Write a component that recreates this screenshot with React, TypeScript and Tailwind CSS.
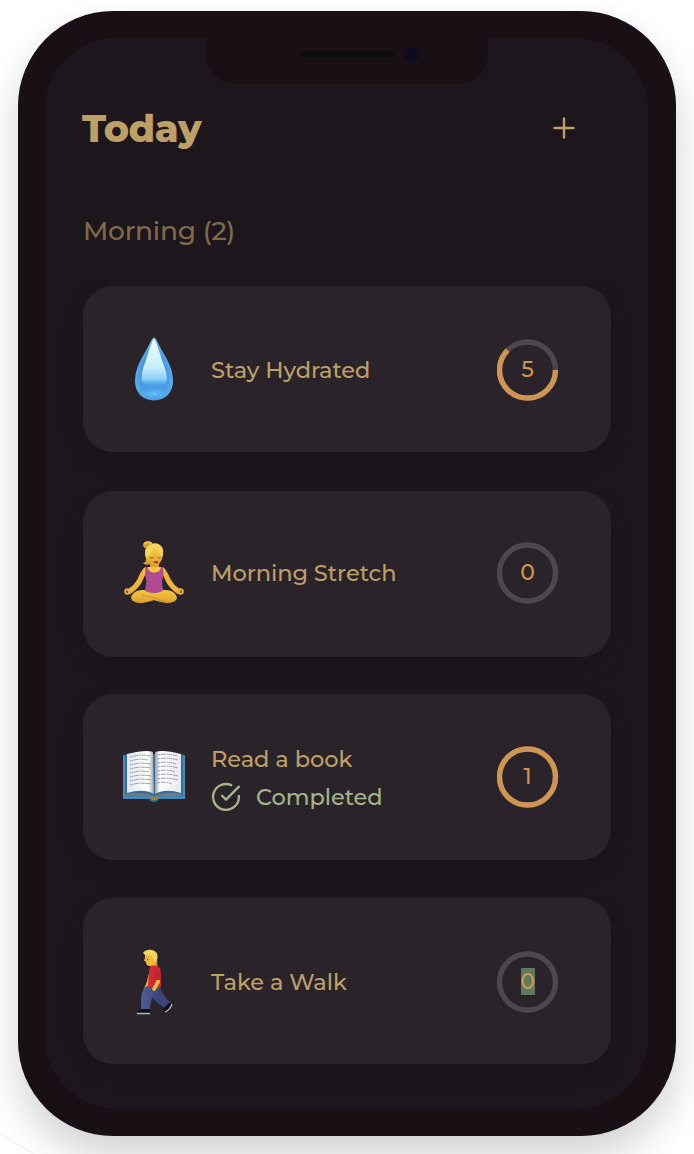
import React from "react";

function Droplet() {
  return (
    <svg width="62" height="66" viewBox="0 0 62 66">
      <defs>
        <radialGradient id="dropBody" cx="50%" cy="62%" r="55%">
          <stop offset="0" stopColor="#4b9fe9" />
          <stop offset=".65" stopColor="#489ae2" />
          <stop offset="1" stopColor="#65b7ec" />
        </radialGradient>
        <linearGradient id="dropShine" x1="0" y1="0" x2="0" y2="1">
          <stop offset="0" stopColor="#f2fcff" />
          <stop offset=".62" stopColor="#c4edfc" />
          <stop offset=".85" stopColor="#8ccff8" />
          <stop offset="1" stopColor="#55a8ed" stopOpacity="0" />
        </linearGradient>
        <radialGradient id="dropGlow">
          <stop offset="0" stopColor="#75dcff" stopOpacity=".65" />
          <stop offset="1" stopColor="#59b8f4" stopOpacity="0" />
        </radialGradient>
      </defs>
      <path d="M31 0.500C29 0.500 27 7 21 17C15 27 12 35 12 44.500C12 55 20 63.500 31 63.500S50 55 50 44.500C50 35 47 27 41 17C35 7 33 0.500 31 0.500Z" fill="url(#dropBody)" />
      <ellipse cx="31" cy="57" rx="17" ry="6.500" fill="url(#dropGlow)" />
      <path d="M31 1.500C28 6 26 14 22 26C19 34 17 43 21 47Q31 52 42 47C46 43 43 34 40 26C36 14 34 6 31 1.500Z" fill="url(#dropShine)" />
    </svg>
  );
}

function Yoga() {
  return (
    <svg width="62" height="64" viewBox="0 0 62 64">
      <defs>
        <linearGradient id="skin" x1="0" y1="0" x2="0" y2="1">
          <stop offset="0" stopColor="#f9c843" />
          <stop offset="1" stopColor="#dc9f2b" />
        </linearGradient>
      </defs>
      <ellipse cx="25" cy="4" rx="5" ry="3.800" fill="#d99e32" />
      <path d="M21 3Q25-1 29 3" stroke="#f5cb5b" strokeWidth="1.500" fill="none" />
      <path d="M23 18Q23 22 19.500 22Q23 25 28 23L27 17Z" fill="#dca236" />
      <path d="M27 20h9v9h-9Z" fill="#dda02a" />
      <path d="M22 14Q21 6 28 3Q36 0 40 8Q41 14 38 20L24 20Z" fill="#e9b43d" />
      <ellipse cx="31.500" cy="16" rx="7.500" ry="8.500" fill="url(#skin)" />
      <path d="M23 17Q20 7 27 4Q37 0 40 9Q40 13 39 16Q36 10 31 7Q28 13 23 17Z" fill="#f8d461" />
      <path d="M27 16.500q2 1.200 3.600 0m4 0q1.800 1.200 3 0" stroke="#86512d" strokeWidth=".9" fill="none" />
      <ellipse cx="33" cy="21.200" rx="2.200" ry="1.100" fill="#8e392e" />
      <path d="M22.500 29Q18.500 34 16.500 40Q13 46 7 50" stroke="#efb538" strokeWidth="5.200" fill="none" strokeLinecap="round" strokeLinejoin="round" />
      <path d="M39.500 29Q43.500 34 45.500 40Q49 46 55 50" stroke="#efb538" strokeWidth="5.200" fill="none" strokeLinecap="round" strokeLinejoin="round" />
      <circle cx="4.500" cy="50.500" r="2.300" fill="none" stroke="#e9ae38" strokeWidth="2" />
      <circle cx="57.500" cy="50.500" r="2.300" fill="none" stroke="#e9ae38" strokeWidth="2" />
      <path d="M20 30Q20 26 26 26H36Q42 26 42 30L38 38H24Z" fill="#f5c245" />
      <path d="M23 47h17l2 12H21Z" fill="#3f90b5" />
      <path d="M22 49Q11 48 8 56Q8 62 19 62Q32 60 43 54Q31 54 22 49Z" fill="url(#skin)" />
      <path d="M40 49Q51 48 54 56Q54 62 43 62Q30 60 19 54Q31 54 40 49Z" fill="url(#skin)" />
      <path d="M19 54Q31 56 43 61" stroke="#c98928" strokeWidth=".8" fill="none" />
      <path d="M24.500 26C25 30 28 31.500 31 31.500C35 31.500 37.500 30 38 26L40 26L40.500 34L39 40L40 50Q31 54 22 50L23.500 40L22 34L22.500 26Z" fill="#b04b91" />
    </svg>
  );
}

function Book() {
  return (
    <svg width="62" height="54" viewBox="0 0 62 54">
      <defs>
        <linearGradient id="pageLeft">
          <stop offset="0" stopColor="#e2e4ec" />
          <stop offset=".8" stopColor="#ffffff" />
          <stop offset="1" stopColor="#9b9ca5" />
        </linearGradient>
        <linearGradient id="pageRight">
          <stop offset="0" stopColor="#9b9ca5" />
          <stop offset=".18" stopColor="#ffffff" />
          <stop offset="1" stopColor="#e6e7ed" />
        </linearGradient>
      </defs>
      <path d="M0 5L4 4H58L62 5V49H36Q35 52 31 52T26 49H0Z" fill="#326f98" />
      <path d="M1 6V47.500H27M61 6V47.500H35" fill="none" stroke="#4b92bd" strokeWidth="1.800" />
      <path d="M3 44Q20 41 31 46Q43 41 59 44V46H36Q35 49 31 49T26 46H3Z" fill="#777980" />
      <path d="M27 47h9l-2 3h-5Z" fill="#a2832b" />
      <path d="M4 4Q23-1 30 2L31 44Q20 38 4 43Z" fill="url(#pageLeft)" />
      <path d="M32 2Q40-1 58 4V43Q43 38 32 44Z" fill="url(#pageRight)" />
      <g stroke="#92949d" strokeWidth=".9" strokeDasharray="3 .7 5 .8 2 .6" fill="none">
        <path d="M7 7q10-3 20-1M7 11q10-3 18-1M7 15q10-3 21-1M7 19q10-3 21-1M7 23q10-3 19-1M7 27q10-3 21-1M7 31q10-3 21-1M7 35q10-3 21-1M34 5q11-2 20 1M34 9q11-2 21 1M34 13q11-2 19 1M34 17q11-2 21 1M34 21q11-2 18 1M34 25q11-2 21 1M34 29q11-2 21 1M34 33q9-2 15 1" />
      </g>
    </svg>
  );
}

function Walker() {
  return (
    <svg width="62" height="68" viewBox="0 -1 62 68">
      <defs>
        <linearGradient id="trousers">
          <stop offset="0" stopColor="#505d94" />
          <stop offset="1" stopColor="#3b4679" />
        </linearGradient>
      </defs>
      <path d="M27 12L34 11L34.500 19L28 20Z" fill="#dc9c29" />
      <path d="M22 5Q28 1 34 5L33 12Q32 17 27 17Q23 17 23 13L21 11.500L22 9Z" fill="#efb93a" />
      <path d="M20 4Q23 0 29 1Q35 2 34.500 9L33 13L31 12L29 7Q26 6 22 6Z" fill="#fbd264" />
      <path d="M24.500 10v1.300" stroke="#58391c" strokeWidth="1" />
      <path d="M27 26L25 34L22 41" stroke="#e9b038" strokeWidth="3" fill="none" strokeLinecap="round" />
      <path d="M28 40L37 38Q39 46 49 55L43 60Q33 54 27 46Z" fill="#3b4577" />
      <path d="M24 37L37 38L36 43L29 48L26.500 61H18.500Q17.500 53 18.500 46Q20 39 24 37Z" fill="url(#trousers)" />
      <path d="M27 17Q34 15 37.500 20L38 38Q31 41 25 38L26 24Z" fill="#cf2936" />
      <path d="M35 29L35 33L31 40" stroke="#f1bd3c" strokeWidth="3.600" fill="none" strokeLinecap="round" strokeLinejoin="round" />
      <path d="M31 21Q36 19 37.500 25V31H32Z" fill="#c32532" />
      <path d="M19 60L27 60V64H14Q15 61 19 60ZM46 54L49 55Q47 62 42 63L40 60Z" fill="#0c0e19" />
      <path d="M14 64.500H27M42 63Q47 61 49 55" stroke="#b9b9be" strokeWidth="1.300" fill="none" />
    </svg>
  );
}

function Ring({ value, progress, selected = false }: { value: string; progress: number; selected?: boolean }) {
  return (
    <div className="grid h-[62px] w-[62px] shrink-0 place-items-center">
      <svg className="col-start-1 row-start-1" width="62" height="62" viewBox="0 0 62 62">
        <circle cx="30.500" cy="31" r="28" fill="none" stroke="#4d484e" strokeWidth="5.400" />
        {progress > 0 && (
          <circle cx="30.500" cy="31" r="28" fill="none" stroke="#cf9553" strokeWidth="5.400" pathLength="100" strokeDasharray={`${progress} 100`} />
        )}
      </svg>
      <span className={`z-10 col-start-1 row-start-1 mb-px mr-px flex h-[27px] w-[14px] items-center justify-center text-[22px] font-medium leading-[27px] text-[#cf9553] ${selected ? "bg-[#60795a]" : ""}`}>
        {value}
      </span>
    </div>
  );
}

function HabitCard({ icon, title, value, progress, nudge = "", completed = false, selected = false }: {
  icon: React.ReactNode; title: string; value: string; progress: number; nudge?: string; completed?: boolean; selected?: boolean;
}) {
  return (
    <article className={`flex h-[166px] shrink-0 items-center rounded-[30px] bg-[#2a2329] pl-10 pr-[52px] shadow-[0_10px_20px_rgba(15,10,15,0.25)] ${nudge}`}>
      <div className="flex w-[62px] shrink-0 justify-center">{icon}</div>
      <div className={`ml-[26px] flex-1 whitespace-nowrap text-[22.5px] font-medium leading-[30px] tracking-[-0.06px] ${completed ? "pt-[3px]" : ""}`}>
        <h3 className="text-[#bea067]">{title}</h3>
        {completed && (
          <div className="mt-[7px] flex h-8 items-center text-[#a3b68a]">
            <svg className="h-[31px] w-[31px]" viewBox="0.4 0.4 24 24" fill="none" stroke="currentColor" strokeWidth="1.8" strokeLinecap="round" strokeLinejoin="round">
              <path d="M22 11.08V12a10 10 0 1 1-5.93-9.14" />
              <path d="M22 4L12 14.01l-3-3" />
            </svg>
            <span className="ml-[14px]">Completed</span>
          </div>
        )}
      </div>
      <Ring value={value} progress={progress} selected={selected} />
    </article>
  );
}

export default function App() {
  return (
    <div className="relative h-[1154px] w-[694px] overflow-hidden bg-white pl-[18px] pt-[11px] font-['Montserrat','Inter',sans-serif]">
      <svg className="absolute bottom-0 left-0" width="34" height="22">
        <path d="M0 2L34 22" stroke="#f0f7f7" strokeWidth="1.5" />
      </svg>
      <main className="relative h-[1125px] w-[658px] rounded-[95px] bg-[#181015] pb-[27px] pl-[27px] pr-7 pt-[27px] shadow-[0_20px_40px_rgba(0,0,0,0.18)]">
        <div className="h-[1071px] overflow-hidden rounded-[72px] bg-[#1e161d]">
          <div className="ml-[161px] flex h-[46px] w-[282px] rounded-b-[30px] bg-[#181015]">
            <div className="ml-[95px] mt-[13px] h-[7px] w-[93px] rounded-full bg-[#0c0b0d]" />
            <div className="ml-[10px] mt-[9px] h-[15px] w-[15px] rounded-full bg-[#0f0a22]" />
          </div>
          <header className="flex h-[88px] items-center justify-between pl-[37px] pr-[73px]">
            <h1 className="pt-px text-[38px] font-extrabold leading-[48px] tracking-[-0.4px] text-[#bea067]">Today</h1>
            <svg className="h-[22px] w-[22px]" viewBox="0 0 22 22" fill="none" stroke="#bea067" strokeWidth="2.4" strokeLinecap="round">
              <path d="M11 1.500v19M1.500 11h19" />
            </svg>
          </header>
          <section className="pl-[38px] pr-[37px] pt-[40px]">
            <h2 className="text-[26.5px] font-medium leading-[38px] tracking-[-0.25px] text-[#806a4a]">Morning (2)</h2>
            <div className="mt-9 flex flex-col gap-[38px]">
              <HabitCard icon={<Droplet />} title="Stay Hydrated" value="5" progress={62.5} nudge="pt-[2px]" />
              <HabitCard icon={<Yoga />} title="Morning Stretch" value="0" progress={0} nudge="mt-px -mb-px pb-[2px]" />
              <HabitCard icon={<Book />} title="Read a book" value="1" progress={100} completed />
              <HabitCard icon={<Walker />} title="Take a Walk" value="0" progress={0} nudge="pt-px" selected />
            </div>
          </section>
        </div>
      </main>
    </div>
  );
}
